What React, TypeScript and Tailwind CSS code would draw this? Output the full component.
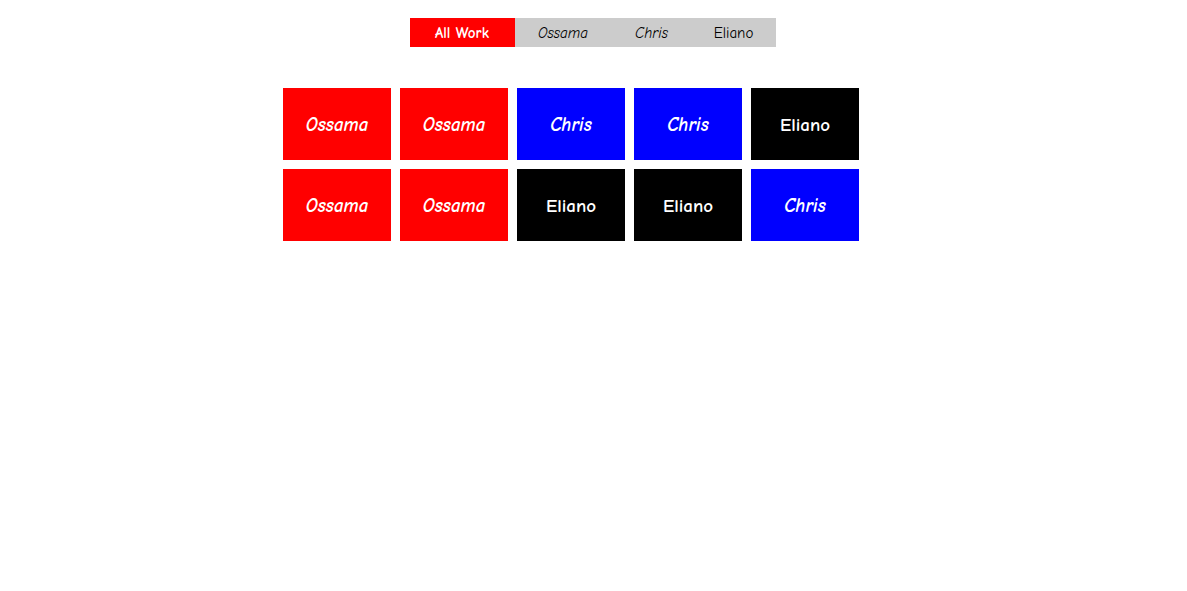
const tabs = [
  { label: "All Work", w: "w-[105px]", active: true, italic: false },
  { label: "Ossama", w: "w-[97px]", active: false, italic: true },
  { label: "Chris", w: "w-[80px]", active: false, italic: true },
  { label: "Eliano", w: "w-[84px]", active: false, italic: false },
];

const cards = [
  "Ossama", "Ossama", "Chris", "Chris", "Eliano",
  "Ossama", "Ossama", "Eliano", "Eliano", "Chris",
];

function cardStyle(name: string) {
  if (name === "Ossama") return "bg-[#ff0000] italic";
  if (name === "Chris") return "bg-[#0000ff] italic";
  return "bg-black";
}

export default function App() {
  return (
    <div className="min-h-screen bg-white font-['Comic_Sans_MS','Comic_Neue','Open_Sans',sans-serif]">
      <div className="flex justify-center pt-[18px] pr-[2px]">
        <ul className="flex bg-[#cccccc]">
          {tabs.map((t) => (
            <li
              key={t.label}
              className={`${t.w} h-[29px] flex items-center justify-center pt-px text-[15px] ${
                t.active ? "bg-[#ff0000] text-white font-bold" : "text-black font-medium"
              } ${t.italic ? "italic" : ""}`}
            >
              {t.label}
            </li>
          ))}
        </ul>
      </div>
      <div className="w-[621px] mx-auto mt-[41px] flex flex-wrap gap-[9px]">
        {cards.map((c, i) => (
          <div
            key={i}
            className={`w-[108px] h-[72px] flex items-center justify-center pt-[3px] text-white text-[19px] font-bold ${cardStyle(c)}`}
          >
            {c}
          </div>
        ))}
      </div>
    </div>
  );
}
